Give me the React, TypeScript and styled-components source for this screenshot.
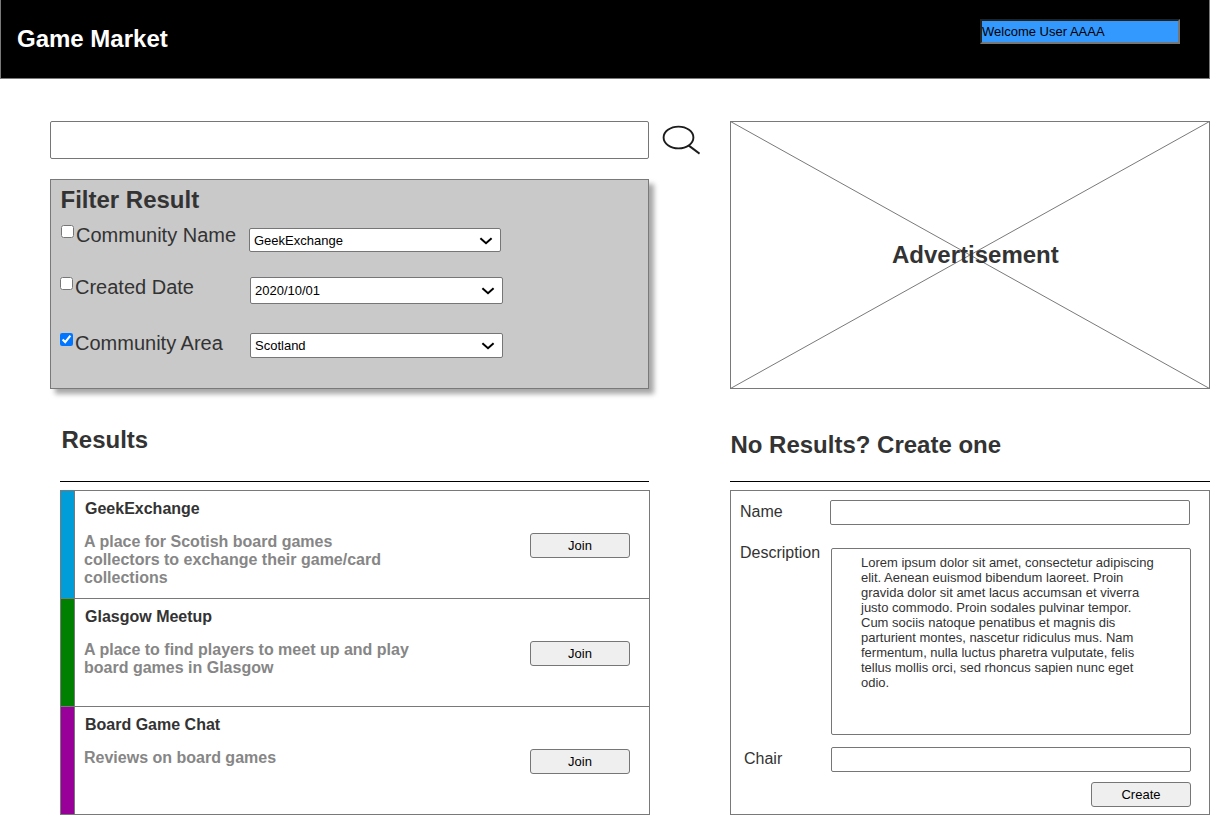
import React from 'react';
import styled, { createGlobalStyle } from 'styled-components';

const GlobalStyle = createGlobalStyle`
  * { box-sizing: border-box; }
  body {
    margin: 0;
    background: #fff;
    color: #333;
    font-family: "Liberation Sans", Arial, sans-serif;
  }
`;

const Page = styled.div`
  width: 1210px;
`;

const Header = styled.header`
  display: flex;
  justify-content: space-between;
  align-items: flex-start;
  height: 79px;
  padding: 19px 29px 0 16px;
  background: #000;
  border: 1px solid #797979;
  border-top: 0;
`;

const Brand = styled.h1`
  margin: 6px 0 0;
  font-size: 24px;
  line-height: 27px;
  color: #fff;
`;

const UserBox = styled.div`
  width: 200px;
  height: 25px;
  border: 2px solid;
  border-color: #222 #767676 #767676 #222;
  background: #3399ff;
  color: #000;
  font-size: 13px;
  line-height: 21px;
`;

const Main = styled.main`
  display: flex;
  gap: 30px;
  padding: 42px 0 12px 50px;
`;

const LeftColumn = styled.div`
  width: 650px;
`;

const RightColumn = styled.div`
  width: 480px;
`;

const SearchRow = styled.form`
  display: flex;
  gap: 12px;
  height: 58px;
`;

const TextInput = styled.input<{ $width: number; $height: number }>`
  display: block;
  flex: none;
  width: ${(p) => p.$width}px;
  height: ${(p) => p.$height}px;
  margin: 0;
  padding: 2px;
  border: 1px solid #767676;
  border-radius: 2px;
  background: #fff;
  font: 13px "Liberation Sans", Arial, sans-serif;
  outline: none;
`;

const SearchIcon = styled.svg`
  flex: none;
  width: 39px;
  height: 30px;
  margin-top: 4px;
`;

const FilterPanel = styled.section`
  width: 599px;
  height: 210px;
  padding: 6px 9px 0;
  background: #c9c9c9;
  border: 1px solid #797979;
  box-shadow: 5px 5px 5px rgba(0, 0, 0, 0.35);
`;

const Heading = styled.h2<{ $indent?: number }>`
  margin: 0;
  padding-left: ${(p) => p.$indent ?? 0}px;
  font-size: 24px;
  line-height: 27px;
`;

const FilterList = styled.div`
  padding-top: 11px;
`;

const FilterRow = styled.div<{ $height: number; $indent: number }>`
  display: flex;
  align-items: flex-start;
  height: ${(p) => p.$height}px;
  padding-left: ${(p) => p.$indent}px;
`;

const FilterLabel = styled.label<{ $width: number }>`
  display: flex;
  flex: none;
  width: ${(p) => p.$width}px;
  font-size: 20px;
  line-height: 22px;
  white-space: nowrap;
`;

const Checkbox = styled.input`
  width: 13px;
  height: 13px;
  margin: 1px 2px 0 0;
`;

const SelectBox = styled.div<{ $width: number; $height: number; $drop: number }>`
  display: grid;
  align-items: center;
  width: ${(p) => p.$width}px;
  height: ${(p) => p.$height}px;
  margin-top: ${(p) => p.$drop}px;

  & > * {
    grid-area: 1 / 1;
  }
`;

const Select = styled.select`
  appearance: none;
  width: 100%;
  height: 100%;
  margin: 0;
  padding: 0 30px 0 4px;
  border: 1px solid #767676;
  border-radius: 2px;
  background: #fff;
  color: #000;
  font: 13px "Liberation Sans", Arial, sans-serif;
`;

const Chevron = styled.svg`
  justify-self: end;
  width: 14px;
  height: 8px;
  margin: 1px 8px 0 0;
  pointer-events: none;
`;

const ResultsSection = styled.section`
  width: 590px;
  margin: 37px 0 0 10px;
`;

const SectionTitle = styled.div<{ $top: number; $indent: number; $width: number }>`
  width: ${(p) => p.$width}px;
  height: 56px;
  margin-bottom: 8px;
  padding: ${(p) => p.$top}px 0 0 ${(p) => p.$indent}px;
  border-bottom: 1px solid #000;
`;

const ResultList = styled.div`
  border: 1px solid #797979;
`;

const ResultRow = styled.article`
  display: flex;
  height: 108px;
  border-bottom: 1px solid #797979;

  &:last-child {
    height: 107px;
    border-bottom: 0;
  }
`;

const ColorStrip = styled.div<{ $color: string }>`
  width: 14px;
  background: ${(p) => p.$color};
  border-right: 1px solid #797979;
`;

const ResultText = styled.div`
  flex: 1;
  padding: 9px 0 0 9px;
`;

const ResultName = styled.h3`
  margin: 0 0 15px 1px;
  font-size: 16px;
  line-height: 18px;
`;

const ResultDescription = styled.p`
  width: 326px;
  margin: 0;
  color: #868686;
  font-size: 16px;
  font-weight: bold;
  line-height: 18px;
`;

const Button = styled.button`
  width: 100px;
  height: 25px;
  padding: 0;
  border: 1px solid #767676;
  border-radius: 3px;
  background: #efefef;
  color: #000;
  font: 13px "Liberation Sans", Arial, sans-serif;
`;

const JoinButton = styled(Button)`
  margin: 42px 19px 0 0;
`;

const AdBox = styled.div`
  display: grid;
  height: 268px;

  & > * {
    grid-area: 1 / 1;
  }
`;

const AdFrame = styled.svg`
  width: 480px;
  height: 268px;
`;

const AdTitle = styled(Heading)`
  z-index: 1;
  align-self: start;
  margin: 120px 0 0 162px;
`;

const CreateSection = styled.section`
  margin-top: 37px;
`;

const CreateForm = styled.form`
  height: 325px;
  padding: 9px 18px 0 9px;
  border: 1px solid #797979;
`;

const Field = styled.div<{ $height: number; $inset?: number }>`
  display: flex;
  align-items: flex-start;
  height: ${(p) => p.$height}px;
  padding-left: ${(p) => p.$inset ?? 0}px;
`;

const FieldLabel = styled.label<{ $width: number; $top: number }>`
  flex: none;
  width: ${(p) => p.$width}px;
  margin-top: ${(p) => p.$top}px;
  font-size: 16px;
  line-height: 18px;
`;

const DescriptionBox = styled.div`
  flex: none;
  width: 360px;
  height: 187px;
  padding: 6px 29px 0;
  border: 1px solid #767676;
  border-radius: 2px;
  font-size: 13px;
  line-height: 15px;
`;

const Actions = styled.div`
  display: flex;
  justify-content: flex-end;
`;

const filters = [
  { label: 'Community Name', value: 'GeekExchange', checked: false, height: 52, indent: 1, labelWidth: 188, width: 252, selectHeight: 24, drop: 4 },
  { label: 'Created Date', value: '2020/10/01', checked: false, height: 56, indent: 0, labelWidth: 190, width: 253, selectHeight: 27, drop: 1 },
  { label: 'Community Area', value: 'Scotland', checked: true, height: 40, indent: 0, labelWidth: 190, width: 253, selectHeight: 25, drop: 1 },
];

const results = [
  { name: 'GeekExchange', color: '#009dd9', text: 'A place for Scotish board games collectors to exchange their game/card collections' },
  { name: 'Glasgow Meetup', color: '#008000', text: 'A place to find players to meet up and play board games in Glasgow' },
  { name: 'Board Game Chat', color: '#990099', text: 'Reviews on board games' },
];

export default function App() {
  return (
    <Page>
      <GlobalStyle />
      <Header>
        <Brand>Game Market</Brand>
        <UserBox>Welcome User AAAA</UserBox>
      </Header>
      <Main>
        <LeftColumn>
          <SearchRow>
            <TextInput $width={599} $height={38} aria-label="Search" />
            <SearchIcon viewBox="0 0 39 30" fill="none" stroke="#1c1c1c">
              <ellipse cx="17.5" cy="12.5" rx="14.9" ry="10.9" strokeWidth="1.9" />
              <path d="M27.5 20.4 L38.6 28.6" strokeWidth="2" />
            </SearchIcon>
          </SearchRow>
          <FilterPanel>
            <Heading $indent={0.5}>Filter Result</Heading>
            <FilterList>
              {filters.map((f) => (
                <FilterRow key={f.label} $height={f.height} $indent={f.indent}>
                  <FilterLabel $width={f.labelWidth}>
                    <Checkbox type="checkbox" defaultChecked={f.checked} />
                    {f.label}
                  </FilterLabel>
                  <SelectBox $width={f.width} $height={f.selectHeight} $drop={f.drop}>
                    <Select defaultValue={f.value} aria-label={f.label}>
                      <option>{f.value}</option>
                    </Select>
                    <Chevron viewBox="0 0 14 8" fill="none" stroke="#000" strokeWidth="2">
                      <path d="M1.4 1.2 L7 6.2 L12.6 1.2" />
                    </Chevron>
                  </SelectBox>
                </FilterRow>
              ))}
            </FilterList>
          </FilterPanel>
          <ResultsSection>
            <SectionTitle $top={0} $indent={1} $width={589}>
              <Heading $indent={0.5}>Results</Heading>
            </SectionTitle>
            <ResultList>
              {results.map((r) => (
                <ResultRow key={r.name}>
                  <ColorStrip $color={r.color} />
                  <ResultText>
                    <ResultName>{r.name}</ResultName>
                    <ResultDescription>{r.text}</ResultDescription>
                  </ResultText>
                  <JoinButton type="button">Join</JoinButton>
                </ResultRow>
              ))}
            </ResultList>
          </ResultsSection>
        </LeftColumn>
        <RightColumn>
          <AdBox>
            <AdTitle>Advertisement</AdTitle>
            <AdFrame viewBox="0 0 480 268" fill="none" stroke="#797979">
              <rect x="0.5" y="0.5" width="479" height="267" />
              <path d="M0.5 0.5 L479.5 267.5 M0.5 267.5 L479.5 0.5" />
            </AdFrame>
          </AdBox>
          <CreateSection>
            <SectionTitle $top={5} $indent={0} $width={480}>
              <Heading $indent={0.4}>No Results? Create one</Heading>
            </SectionTitle>
            <CreateForm>
              <Field $height={48}>
                <FieldLabel $width={90} $top={3}>Name</FieldLabel>
                <TextInput $width={360} $height={25} aria-label="Name" />
              </Field>
              <Field $height={199}>
                <FieldLabel $width={91} $top={-4}>Description</FieldLabel>
                <DescriptionBox>
                  Lorem ipsum dolor sit amet, consectetur adipiscing elit. Aenean euismod bibendum laoreet. Proin
                  gravida dolor sit amet lacus accumsan et viverra justo commodo. Proin sodales pulvinar tempor. Cum
                  sociis natoque penatibus et magnis dis parturient montes, nascetur ridiculus mus. Nam fermentum,
                  nulla luctus pharetra vulputate, felis tellus mollis orci, sed rhoncus sapien nunc eget odio.
                </DescriptionBox>
              </Field>
              <Field $height={35} $inset={4}>
                <FieldLabel $width={87} $top={3}>Chair</FieldLabel>
                <TextInput $width={360} $height={25} aria-label="Chair" />
              </Field>
              <Actions>
                <Button type="button">Create</Button>
              </Actions>
            </CreateForm>
          </CreateSection>
        </RightColumn>
      </Main>
    </Page>
  );
}
